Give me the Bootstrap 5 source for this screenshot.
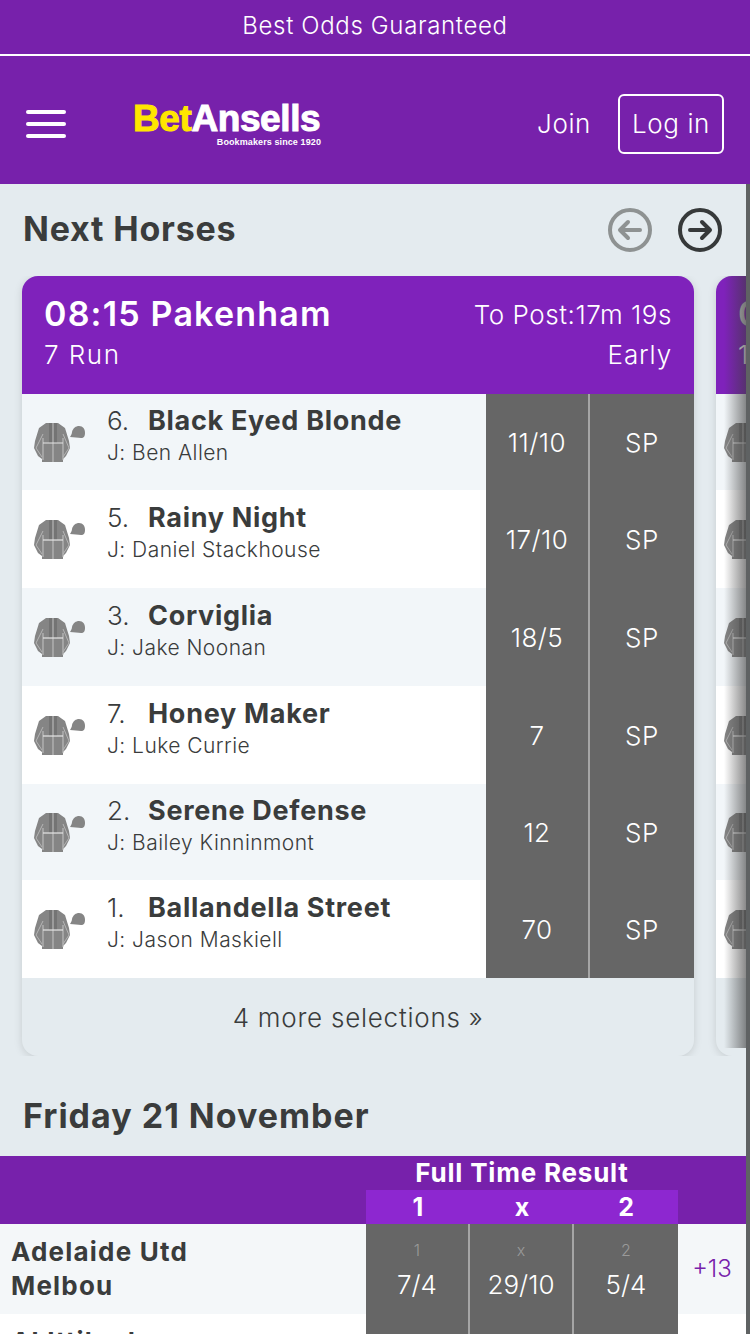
<!DOCTYPE html>
<html lang="en">
<head>
<meta charset="UTF-8">
<title>BetAnsells</title>
<link href="https://cdn.jsdelivr.net/npm/bootstrap@5.3.0/dist/css/bootstrap.min.css" rel="stylesheet">
<style>
html, body { height: 1334px; overflow: hidden; }
body { background: #e4ebef; font-family: Inter, "Liberation Sans", sans-serif; color: #3a3c3c; position: relative; }
.promo-bar { height: 56px; background: #7721ab; color: #fff; border-bottom: 2px solid #fff; font-size: 24px; font-weight: 300; line-height: 51px; letter-spacing: .65px; }
.top-nav { height: 128px; background: #7721ab; color: #fff; padding: 8px 26px 0; }
.burger { width: 40px; }
.burger span { display: block; height: 4px; border-radius: 2px; background: #fff; margin-bottom: 8px; }
.burger span:last-child { margin-bottom: 0; }
.logo { margin-left: 67px; width: 188px; line-height: 1; }
.logo-name { font-family: "Liberation Sans", sans-serif; font-weight: 700; font-size: 37px; letter-spacing: -.4px; display: block; -webkit-text-stroke: 1px currentColor; line-height: 36px; white-space: nowrap; }
.logo-name b { color: #ffe600; font-weight: 700; }
.logo-sub { display: block; font-family: "Liberation Sans", sans-serif; font-size: 9px; line-height: 10px; font-weight: 700; text-align: right; letter-spacing: .1px; }
.join-link { font-size: 26px; font-weight: 300; color: #fff; text-decoration: none; margin: 0 27px 2px 0; letter-spacing: .6px; }
.login-btn { width: 106px; height: 60px; border: 2px solid #fff; border-radius: 6px; color: #fff; font-size: 26px; font-weight: 300; line-height: 52px; text-align: center; padding: 0; letter-spacing: .6px; }
.head-row { height: 92px; padding: 0 28px 0 23px; }
.head-title { font-size: 34px; font-weight: 700; margin: 0 0 2px; letter-spacing: .8px; }
.arrow-btn { width: 44px; height: 44px; margin-left: 26px; display: block; }
.slider { height: 780px; padding-left: 22px; gap: 22px; overflow: hidden; position: relative; }
.slider::after { content: ""; position: absolute; top: 0; right: 4px; bottom: 8px; width: 22px; background: linear-gradient(to right, rgba(60,60,60,0), rgba(60,60,60,.6)); }
.race-card { width: 672px; flex: none; height: 780px; border-radius: 16px; overflow: hidden; background: #e4ebef; box-shadow: 0 2px 8px rgba(0,0,0,.13); }
.race-head { height: 118px; flex: none; background: #7f22bb; color: #fff; padding: 15px 22px 0 22px; }
.race-title { font-size: 34px; font-weight: 600; line-height: 46px; letter-spacing: 1.2px; }
.race-meta { font-size: 26px; font-weight: 300; line-height: 36px; letter-spacing: .9px; }
.run-count { letter-spacing: 1.5px; }
.race-post { font-size: 26px; font-weight: 300; line-height: 46px; padding-top: 1px; margin-bottom: -1px; letter-spacing: .55px; }
.runner { height: 98px; background: #fff; }
.runner:nth-child(odd) { background: #f2f6f9; }
.runner:nth-child(1), .runner:nth-child(5) { height: 96px; }
.runner-info { width: 464px; padding-left: 12px; }
.silk { width: 52px; height: 46px; margin: 2px 21px 0 0; flex: none; }
.runner-text { margin-bottom: 12px; }
.runner-name { font-size: 27px; line-height: 32px; white-space: nowrap; }
.runner-num { display: inline-block; width: 41px; font-weight: 300; font-size: 26px; }
.runner-name b { font-weight: 700; letter-spacing: .7px; }
.jockey { font-size: 21px; font-weight: 300; line-height: 31px; letter-spacing: .45px; }
.odd-cell { background: #666; color: #fff; font-size: 26px; font-weight: 300; letter-spacing: .5px; }
.odd-price { width: 104px; border-right: 2px solid #a5a5a5; }
.odd-sp { width: 104px; }
.more-link { height: 78px; flex: none; font-size: 26px; font-weight: 300; color: #3a3c3c; text-decoration: none; letter-spacing: .75px; }
.race-card.peek { width: 60px; }
.peek .race-title { white-space: nowrap; color: #ccc; }
.peek .race-meta { white-space: nowrap; }
.date-title { font-size: 34px; font-weight: 700; margin: 0; padding: 42px 0 0 23px; height: 100px; letter-spacing: 1px; line-height: 36px; }
.market-head { height: 68px; background: #7721ab; color: #fff; font-weight: 700; }
.market-spacer { width: 366px; flex: none; }
.market-col { width: 312px; text-align: center; }
.market-label { height: 34px; font-size: 26px; line-height: 34px; font-weight: 700; letter-spacing: .8px; }
.market-keys { height: 34px; background: #8d27d0; font-size: 25px; line-height: 35px; }
.market-keys span { width: 104px; }
.match-row { height: 90px; background: #f4f7f9; }
.match-row.alt { background: #fff; }
.teams { width: 366px; flex: none; padding-left: 11px; font-size: 26px; font-weight: 700; line-height: 34px; letter-spacing: 1.2px; }
.teams-top { align-self: flex-start; padding-top: 11px; }
.price-cell { width: 104px; height: 100%; background: #666; color: #fff; font-size: 26px; font-weight: 300; text-align: center; border-right: 2px solid #a5a5a5; line-height: 36px; padding-top: 14px; }
.price-key { display: block; font-size: 16px; line-height: 24px; margin-bottom: 5px; color: #9a9a9a; }
.more-bets { font-size: 24px; font-weight: 300; color: #7721ab; width: 68px; text-align: center; }
.page-bar { position: absolute; right: 0; top: 184px; width: 4px; height: 1150px; background: #5f6263; }
</style>
</head>
<body>
<div class="promo-bar text-center">Best Odds Guaranteed</div>
<nav class="top-nav d-flex align-items-center">
    <div class="burger"><span></span><span></span><span></span></div>
    <div class="logo">
        <span class="logo-name"><b>Bet</b>Ansells</span>
        <span class="logo-sub">Bookmakers since 1920</span>
    </div>
    <a class="join-link ms-auto" href="#">Join</a>
    <button class="btn login-btn" type="button">Log in</button>
</nav>

<div class="head-row d-flex align-items-center">
    <h2 class="head-title me-auto">Next Horses</h2>
    <svg class="arrow-btn" viewBox="0 0 44 44" fill="none" stroke="#8e9292" stroke-width="4" stroke-linecap="round" stroke-linejoin="round"><circle cx="22" cy="22" r="20"/><path d="M32 22H13M20 14l-8 8 8 8"/></svg>
    <svg class="arrow-btn" viewBox="0 0 44 44" fill="none" stroke="#36393a" stroke-width="4" stroke-linecap="round" stroke-linejoin="round"><circle cx="22" cy="22" r="20"/><path d="M12 22h19M24 14l8 8-8 8"/></svg>
</div>

<svg width="0" height="0" class="position-absolute">
    <symbol id="silk" viewBox="0 0 52 46">
        <path d="M12 3h12l7 5 4 13 1 7-4 8-3 3v3H8v-3l-4-3-4-8 1-7 4-13z" fill="#858585"/>
        <path d="M15 3h8v20h-8z" fill="#747474"/>
        <path d="M19 3v39M9 18v22M29 18v22" stroke="#c4c4c4" stroke-width="1" fill="none"/>
        <path d="M9 23h20" stroke="#e6e6e6" stroke-width="1.2" fill="none"/>
        <path d="M9 14L2 28l6 9M29 14l6 14-6 9" stroke="#b5b5b5" stroke-width="1" fill="none"/>
        <path d="M36 17c1-2 2-3 2-5 1-4 4-6 7-6 4 0 6 3 6 7 0 3-1 5-4 5-3 0-7-1-11-1z" fill="#858585"/>
    </symbol>
</svg>

<div class="slider d-flex">
    <div class="race-card d-flex flex-column">
        <div class="race-head d-flex justify-content-between">
            <div><div class="race-title">08:15 Pakenham</div><div class="race-meta run-count">7 Run</div></div>
            <div class="text-end"><div class="race-post">To Post:17m 19s</div><div class="race-meta">Early</div></div>
        </div>
        <div id="runners"></div>
        <a class="more-link d-flex align-items-center justify-content-center" href="#">4 more selections »</a>
    </div>
    <div class="race-card peek d-flex flex-column">
        <div class="race-head"><div class="race-title">08:45</div><div class="race-meta">10 Run</div></div>
        <div id="peekRunners"></div>
    </div>
</div>

<h2 class="date-title">Friday 21 November</h2>
<div class="market-head d-flex">
    <div class="market-spacer"></div>
    <div class="market-col">
        <div class="market-label">Full Time Result</div>
        <div class="market-keys d-flex"><span>1</span><span>x</span><span>2</span></div>
    </div>
</div>
<div class="match-row d-flex align-items-center">
    <div class="teams">Adelaide Utd<br>Melbou</div>
    <div class="price-cell"><span class="price-key">1</span>7/4</div>
    <div class="price-cell"><span class="price-key">x</span>29/10</div>
    <div class="price-cell border-0"><span class="price-key">2</span>5/4</div>
    <div class="more-bets">+13</div>
</div>
<div class="match-row alt d-flex align-items-center">
    <div class="teams teams-top">Al Ittihad</div>
    <div class="price-cell"></div>
    <div class="price-cell"></div>
    <div class="price-cell border-0"></div>
</div>
<div class="page-bar"></div>

<script>
    var runners = [
        ["6.", "Black Eyed Blonde", "Ben Allen", "11/10"],
        ["5.", "Rainy Night", "Daniel Stackhouse", "17/10"],
        ["3.", "Corviglia", "Jake Noonan", "18/5"],
        ["7.", "Honey Maker", "Luke Currie", "7"],
        ["2.", "Serene Defense", "Bailey Kinninmont", "12"],
        ["1.", "Ballandella Street", "Jason Maskiell", "70"]
    ];
    var silk = '<svg class="silk"><use href="#silk"/></svg>';
    var rows = "", peek = "";
    runners.forEach(function (r) {
        rows += '<div class="runner d-flex">' +
            '<div class="runner-info d-flex align-items-center">' + silk +
            '<div class="runner-text"><div class="runner-name"><span class="runner-num">' + r[0] + '</span><b>' + r[1] + '</b></div>' +
            '<div class="jockey">J: ' + r[2] + '</div></div></div>' +
            '<div class="odd-cell odd-price d-flex align-items-center justify-content-center">' + r[3] + '</div>' +
            '<div class="odd-cell odd-sp d-flex align-items-center justify-content-center">SP</div></div>';
        peek += '<div class="runner d-flex align-items-center ps-2">' + silk + '</div>';
    });
    document.getElementById("runners").innerHTML = rows;
    document.getElementById("peekRunners").innerHTML = peek;
</script>
<script src="https://cdn.jsdelivr.net/npm/bootstrap@5.3.0/dist/js/bootstrap.bundle.min.js"></script>
</body>
</html>
